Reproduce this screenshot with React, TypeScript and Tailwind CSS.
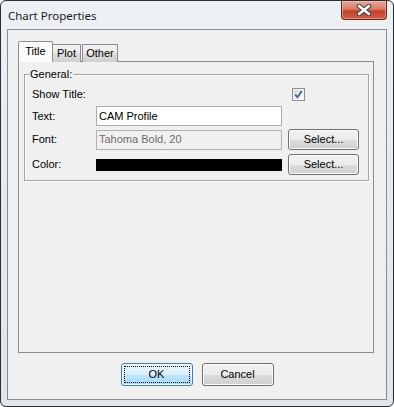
import React from "react";

const font = { fontFamily: '"Liberation Sans", Arial, sans-serif' };

function WinButton({ label, primary }: { label: string; primary?: boolean }) {
  if (primary) {
    return (
      <button
        className="relative w-[72px] h-[23px] rounded-[3px] border border-[#3c7fb1] bg-[linear-gradient(#eaf6fd_0%,#d9f0fc_50%,#bee6fd_50%,#a7d9f5_100%)] shadow-[inset_0_0_0_1px_#f4fbfe] text-[11px] text-black flex items-center justify-center"
        style={font}
      >
        <span className="absolute inset-[2px] border border-dotted border-[#111]" />
        <span className="relative">{label}</span>
      </button>
    );
  }
  return (
    <button
      className="w-[72px] h-[23px] rounded-[3px] border border-[#707070] bg-[linear-gradient(#f2f2f2_0%,#ebebeb_50%,#dddddd_50%,#cfcfcf_100%)] shadow-[inset_0_0_0_1px_#fbfbfb] text-[11px] text-black flex items-center justify-center"
      style={font}
    >
      {label}
    </button>
  );
}

function SelectButton() {
  return (
    <button
      className="w-[71px] h-[21px] rounded-[3px] border border-[#707070] bg-[linear-gradient(#f2f2f2_0%,#ebebeb_50%,#dddddd_50%,#cfcfcf_100%)] shadow-[inset_0_0_0_1px_#fbfbfb] text-[11px] text-black flex items-center justify-center"
      style={font}
    >
      Select...
    </button>
  );
}

export default function App() {
  return (
    <div className="w-[394px] h-[407px] flex flex-col border border-[#2a3038] rounded-[6px] bg-[linear-gradient(180deg,#eef1f4_0%,#e6eaee_40%,#e2e6eb_100%)] overflow-hidden">
      {/* title bar */}
      <div className="h-[28px] flex items-start shrink-0">
        <div
          className="pl-[7px] pt-[6px] text-[11.5px] text-[#1b1b1b]"
          style={{ fontFamily: '"Noto Sans", "Open Sans", sans-serif' }}
        >
          Chart Properties
        </div>
        <div className="flex-1" />
        <div className="mr-[6px] w-[46px] h-[19px] rounded-b-[4px] border border-t-0 border-[#6b2418] bg-[linear-gradient(180deg,#eaa897_0%,#dc7b66_45%,#c5432c_55%,#cf5a40_100%)] shadow-[inset_0_0_0_1px_rgba(255,210,200,0.45)] flex items-center justify-center">
          <svg width="16" height="12" viewBox="0 0 16 12">
            <path d="M3 2 L13 10 M13 2 L3 10" stroke="#3d3d3d" strokeWidth="4.6" strokeLinecap="round" />
            <path d="M3 2 L13 10 M13 2 L3 10" stroke="#ffffff" strokeWidth="2.6" strokeLinecap="round" />
          </svg>
        </div>
      </div>

      {/* client area */}
      <div className="mx-[6px] h-[371px] border border-[#858b93] bg-[#f0f0f0] pt-[11px] pl-[10px] flex flex-col" style={font}>
        {/* tabs */}
        <div className="flex items-end h-[21px] -mb-px relative z-10">
          <div className="w-[35px] h-[21px] border border-b-0 border-[#898c95] bg-[#fbfbfb] rounded-t-[2px] text-[11px] text-black flex items-center justify-center pb-[1px]">
            Title
          </div>
          <div className="w-[28px] h-[18px] border border-l-0 border-b-0 border-[#898c95] bg-[linear-gradient(#f3f3f3_0%,#ebebeb_50%,#dddddd_50%,#cfcfcf_100%)] text-[11px] text-black flex items-center justify-center">
            Plot
          </div>
          <div className="ml-[1px] w-[36px] h-[18px] border border-b-0 border-[#898c95] bg-[linear-gradient(#f3f3f3_0%,#ebebeb_50%,#dddddd_50%,#cfcfcf_100%)] text-[11px] text-black flex items-center justify-center">
            Other
          </div>
        </div>

        {/* tab panel */}
        <div className="w-[356px] h-[292px] border border-[#898c95] bg-[#f0f0f0] pt-[12px] pl-[5px]">
          <div className="relative w-[345px] h-[107px] border border-[#a5a5a5] shadow-[1px_1px_0_#ffffff,inset_1px_1px_0_#ffffff] pt-[9px] pl-[7px] pb-[6px]">
            <span className="absolute left-[4px] -top-[8px] px-[1px] bg-[#f0f0f0] text-[11px] text-black leading-[14px]">
              General:
            </span>
            <div className="grid grid-cols-[58px_186px_71px] gap-x-[6px] text-[11px] text-black">
              {/* row 1 */}
              <div className="h-[20px] flex items-center">Show Title:</div>
              <div className="h-[20px]" />
              <div className="h-[20px] flex items-center pl-[4px]">
                <div className="w-[13px] h-[13px] border border-[#8f8f8f] bg-[linear-gradient(135deg,#cfcfcf_0%,#f0f0f0_60%,#fbfbfb_100%)] shadow-[inset_0_0_0_1px_#f4f4f4] flex items-center justify-center">
                  <svg width="9" height="9" viewBox="0 0 9 9">
                    <path d="M1.2 4.6 L3.5 7.2 L7.8 1" stroke="#4a5f92" strokeWidth="1.8" fill="none" />
                  </svg>
                </div>
              </div>

              {/* row 2 */}
              <div className="h-[20px] mt-[2px] flex items-center">Text:</div>
              <div className="h-[20px] mt-[2px] border border-[#abadb3] bg-white flex items-center pl-[2px]">CAM Profile</div>
              <div className="h-[20px] mt-[2px]" />

              {/* row 3 */}
              <div className="h-[21px] mt-[3px] flex items-center">Font:</div>
              <div className="h-[21px] mt-[3px] flex items-center">
                <div className="w-full h-[20px] border border-[#afb3b9] bg-[#f0f0f0] flex items-center pl-[2px] text-[#6d6d6d]">
                  Tahoma Bold, 20
                </div>
              </div>
              <div className="h-[21px] mt-[3px] flex items-center">
                <SelectButton />
              </div>

              {/* row 4 */}
              <div className="h-[21px] mt-[4px] flex items-center">Color:</div>
              <div className="h-[21px] mt-[4px] flex items-center">
                <div className="w-full h-[12px] bg-black" />
              </div>
              <div className="h-[21px] mt-[4px] flex items-center">
                <SelectButton />
              </div>
            </div>
          </div>
        </div>

        {/* dialog buttons */}
        <div className="mt-[10px] pr-[10px] flex justify-center gap-[9px]">
          <WinButton label="OK" primary />
          <WinButton label="Cancel" />
        </div>
      </div>
    </div>
  );
}
